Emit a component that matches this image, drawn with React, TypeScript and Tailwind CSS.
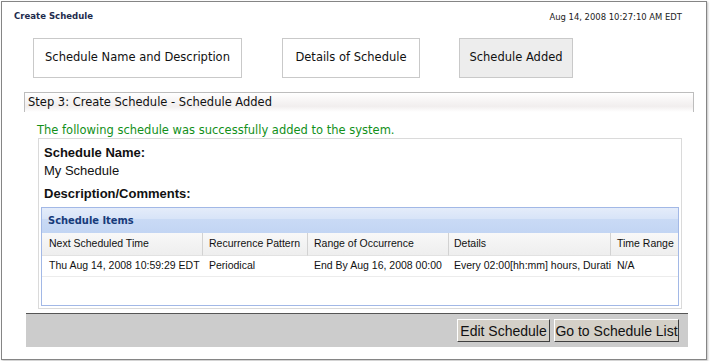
import React from "react";

const tahomaB = { fontFamily: '"DejaVu Sans Condensed", "DejaVu Sans", sans-serif' };
const tahoma = { fontFamily: '"DejaVu Sans", sans-serif' };
const arial = { fontFamily: '"Liberation Sans", Arial, sans-serif' };

const cols = [
  { h: "Next Scheduled Time", d: "Thu Aug 14, 2008 10:59:29 EDT", pl: "pl-[7px]" },
  { h: "Recurrence Pattern", d: "Periodical", pl: "pl-[6px]" },
  { h: "Range of Occurrence", d: "End By Aug 16, 2008 00:00", pl: "pl-[6px]" },
  { h: "Details", d: "Every 02:00[hh:mm] hours, Duration 01:00[hh:mm]", pl: "pl-[5px]" },
  { h: "Time Range", d: "N/A", pl: "pl-[6px]" },
];

export default function App() {
  return (
    <div className="w-[712px] h-[361px] bg-white overflow-hidden">
      <div className="ml-[1px] mt-[1px] w-[706px] h-[359px] border border-[#858585] shadow-[1px_1px_2px_rgba(0,0,0,0.25)] flex flex-col">
        {/* header */}
        <div className="flex items-center justify-between pt-[7px] pl-[12px] pr-[24px] h-[21px]">
          <span style={tahomaB} className="text-[9.5px] font-bold text-[#1e2b4d] leading-[12px]">
            Create Schedule
          </span>
          <span style={tahomaB} className="text-[9.4px] text-[#222] leading-[12px] mt-[2px]">
            Aug 14, 2008 10:27:10 AM EDT
          </span>
        </div>

        {/* steps */}
        <div style={tahoma} className="flex mt-[15px] pl-[31px] text-[11.5px] text-[#111]">
          <div className="w-[209px] h-[40px] border border-[#c9c9c9] bg-white flex items-center justify-center">
            Schedule Name and Description
          </div>
          <div className="ml-[40px] w-[138px] h-[40px] border border-[#c9c9c9] bg-white flex items-center justify-center">
            Details of Schedule
          </div>
          <div className="ml-[39px] w-[114px] h-[40px] border border-[#c9c9c9] bg-[#ededed] flex items-center justify-center">
            Schedule Added
          </div>
        </div>

        {/* step panel header */}
        <div
          style={tahoma}
          className="mt-[14px] ml-[22px] w-[670px] h-[20px] border-t border-l border-r border-[#bdbdbd] bg-[linear-gradient(to_bottom,#ffffff_0%,#f7f5f5_40%,#f1eeee_70%,#ffffff_100%)] pl-[3px] text-[11.5px] leading-[18px] text-[#111]"
        >
          Step 3: Create Schedule - Schedule Added
        </div>

        <div style={tahoma} className="ml-[35px] mt-[10px] text-[11.5px] leading-[16px] text-[#12901a]">
          The following schedule was successfully added to the system.
        </div>

        {/* content box */}
        <div className="ml-[36px] w-[644px] border border-[#dadada] px-[2px] pb-[2px]" style={arial}>
          <div className="pl-[3px] pt-[6px] text-[13px] font-bold leading-[16px] text-[#111]">Schedule Name:</div>
          <div className="pl-[3px] mt-[2px] text-[13px] leading-[16px] text-[#111]">My Schedule</div>
          <div className="pl-[3px] mt-[7px] text-[13px] font-bold leading-[16px] text-[#111]">Description/Comments:</div>

          <div className="mt-[5px] border border-[#a2b8e6] h-[99px] bg-white">
            <div
              style={tahomaB}
              className="h-[25px] bg-[linear-gradient(to_bottom,#e4ecfa_0%,#d8e4f8_42%,#c9daf5_44%,#c2d5f3_100%)] pl-[6px] text-[11px] font-bold text-[#173b7a] leading-[25px]"
            >
              Schedule Items
            </div>
            <div className="grid grid-cols-[161px_105px_141px_162px_67px] text-[10.5px] text-[#111]">
              {cols.map((c, i) => (
                <div
                  key={"h" + i}
                  className={`h-[23px] flex items-center whitespace-nowrap overflow-hidden bg-[linear-gradient(to_bottom,#f8f8f8_0%,#eeeeee_100%)] border-b border-[#e2e2e2] ${
                    i < 4 ? "border-r border-r-[#d2d2d2]" : ""
                  } ${c.pl}`}
                >
                  {c.h}
                </div>
              ))}
              {cols.map((c, i) => (
                <div
                  key={"d" + i}
                  className={`h-[21px] flex items-center border-b border-[#ececec] whitespace-nowrap overflow-hidden ${c.pl}`}
                >
                  {c.d}
                </div>
              ))}
            </div>
          </div>
        </div>

        {/* button bar */}
        <div className="mt-[4px] ml-[24px] w-[662px] h-[34px] bg-[#cccccc] border-t border-[#555555] flex items-center justify-end pr-[9px] gap-[4px]" style={arial}>
          <button className="h-[23px] w-[93px] bg-[#d4d0c8] border border-t-white border-l-white border-r-[#404040] border-b-[#404040] text-[14px] text-[#111] leading-none">
            Edit Schedule
          </button>
          <button className="h-[23px] w-[125px] bg-[#d4d0c8] border border-t-white border-l-white border-r-[#404040] border-b-[#404040] text-[14px] text-[#111] leading-none">
            Go to Schedule List
          </button>
        </div>
      </div>
    </div>
  );
}
